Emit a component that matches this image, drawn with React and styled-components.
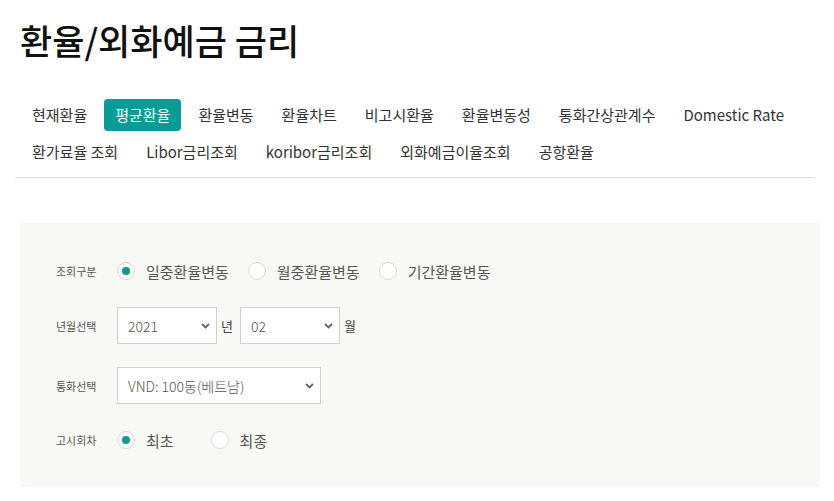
import styled, { createGlobalStyle } from "styled-components";

const GlobalStyle = createGlobalStyle`
  body {
    margin: 0;
    background: #fff;
    font-family: "Noto Sans CJK KR", "Noto Sans", sans-serif;
    color: #333;
  }
`;

const tabs = [
  "현재환율",
  "평균환율",
  "환율변동",
  "환율차트",
  "비고시환율",
  "환율변동성",
  "통화간상관계수",
  "Domestic Rate",
  "환가료율 조회",
  "Libor금리조회",
  "koribor금리조회",
  "외화예금이율조회",
  "공항환율",
];

function Chevron() {
  return (
    <Arrow width="9" height="6" viewBox="0 0 9 6">
      <path d="M1 1l3.5 3.5L8 1" fill="none" stroke="#666" strokeWidth="1.8" />
    </Arrow>
  );
}

function Radio({ checked, label, spacing }) {
  return (
    <Option spacing={spacing}>
      <Circle checked={checked} />
      <OptionText>{label}</OptionText>
    </Option>
  );
}

function Select({ value, width }) {
  return (
    <SelectBox width={width}>
      {value}
      <Chevron />
    </SelectBox>
  );
}

export default function App() {
  return (
    <Page>
      <GlobalStyle />
      <Title>환율/외화예금 금리</Title>
      <TabList>
        {tabs.map((t) => (
          <Tab key={t} active={t === "평균환율"}>
            {t}
          </Tab>
        ))}
      </TabList>
      <Divider />
      <Panel>
        <Row>
          <Label>조회구분</Label>
          <Radio checked label="일중환율변동" spacing={19} />
          <Radio label="월중환율변동" spacing={19} />
          <Radio label="기간환율변동" />
        </Row>
        <Row tall>
          <Label>년월선택</Label>
          <Select value="2021" width={100} />
          <Unit>년</Unit>
          <Select value="02" width={100} />
          <Unit>월</Unit>
        </Row>
        <Row tall>
          <Label>통화선택</Label>
          <Select value="VND: 100동(베트남)" width={204} />
        </Row>
        <Row>
          <Label>고시회차</Label>
          <Radio checked label="최초" spacing={37} />
          <Radio label="최종" />
        </Row>
      </Panel>
    </Page>
  );
}

const Page = styled.div`
  margin-left: 15px;
  width: 800px;
  padding-top: 17px;
`;

const Title = styled.h1`
  margin: 0 0 37px 5px;
  font-size: 35px;
  line-height: 45px;
  font-weight: 500;
  color: #111;
`;

const TabList = styled.div`
  display: flex;
  flex-wrap: wrap;
  row-gap: 5px;
  column-gap: 6px;
  padding: 0 0 9px 6px;
`;

const Tab = styled.div`
  height: 32px;
  line-height: 32px;
  padding: 0 11px;
  border-radius: 4px;
  font-size: 15px;
  color: ${({ active }) => (active ? "#fff" : "#333")};
  background: ${({ active }) => (active ? "#0a9a97" : "transparent")};
`;

const Divider = styled.div`
  height: 1px;
  background: #ddd;
`;

const Panel = styled.div`
  margin: 45px 0 0 5px;
  width: 800px;
  box-sizing: border-box;
  background: #f8f8f4;
  padding: 35px 0 34px 36px;
  display: flex;
  flex-direction: column;
  gap: 23px;
`;

const Row = styled.div`
  display: flex;
  align-items: center;
  height: ${({ tall }) => (tall ? "37px" : "26px")};
`;

const Label = styled.div`
  width: 61px;
  font-size: 11px;
  color: #555;
`;

const Option = styled.div`
  display: flex;
  align-items: center;
  margin-right: ${({ spacing }) => spacing || 0}px;
`;

const Circle = styled.span`
  position: relative;
  width: 18px;
  height: 18px;
  box-sizing: border-box;
  border-radius: 50%;
  border: 1px solid #d8d8d8;
  background: #fff;

  &::after {
    content: "";
    display: ${({ checked }) => (checked ? "block" : "none")};
    position: absolute;
    left: 4px;
    top: 4px;
    width: 8px;
    height: 8px;
    border-radius: 50%;
    background: #0a9a97;
  }
`;

const OptionText = styled.span`
  margin-left: 11px;
  font-size: 15px;
  color: #555;
`;

const SelectBox = styled.div`
  position: relative;
  width: ${({ width }) => width}px;
  height: 37px;
  box-sizing: border-box;
  border: 1px solid #d0d0d0;
  background: #fff;
  padding-left: 10px;
  display: flex;
  align-items: center;
  font-size: 14px;
  font-weight: 300;
  color: #555;
`;

const Arrow = styled.svg`
  position: absolute;
  right: 6px;
  top: 15px;
`;

const Unit = styled.span`
  margin: 0 7px 0 4px;
  font-size: 13px;
  color: #444;
`;
